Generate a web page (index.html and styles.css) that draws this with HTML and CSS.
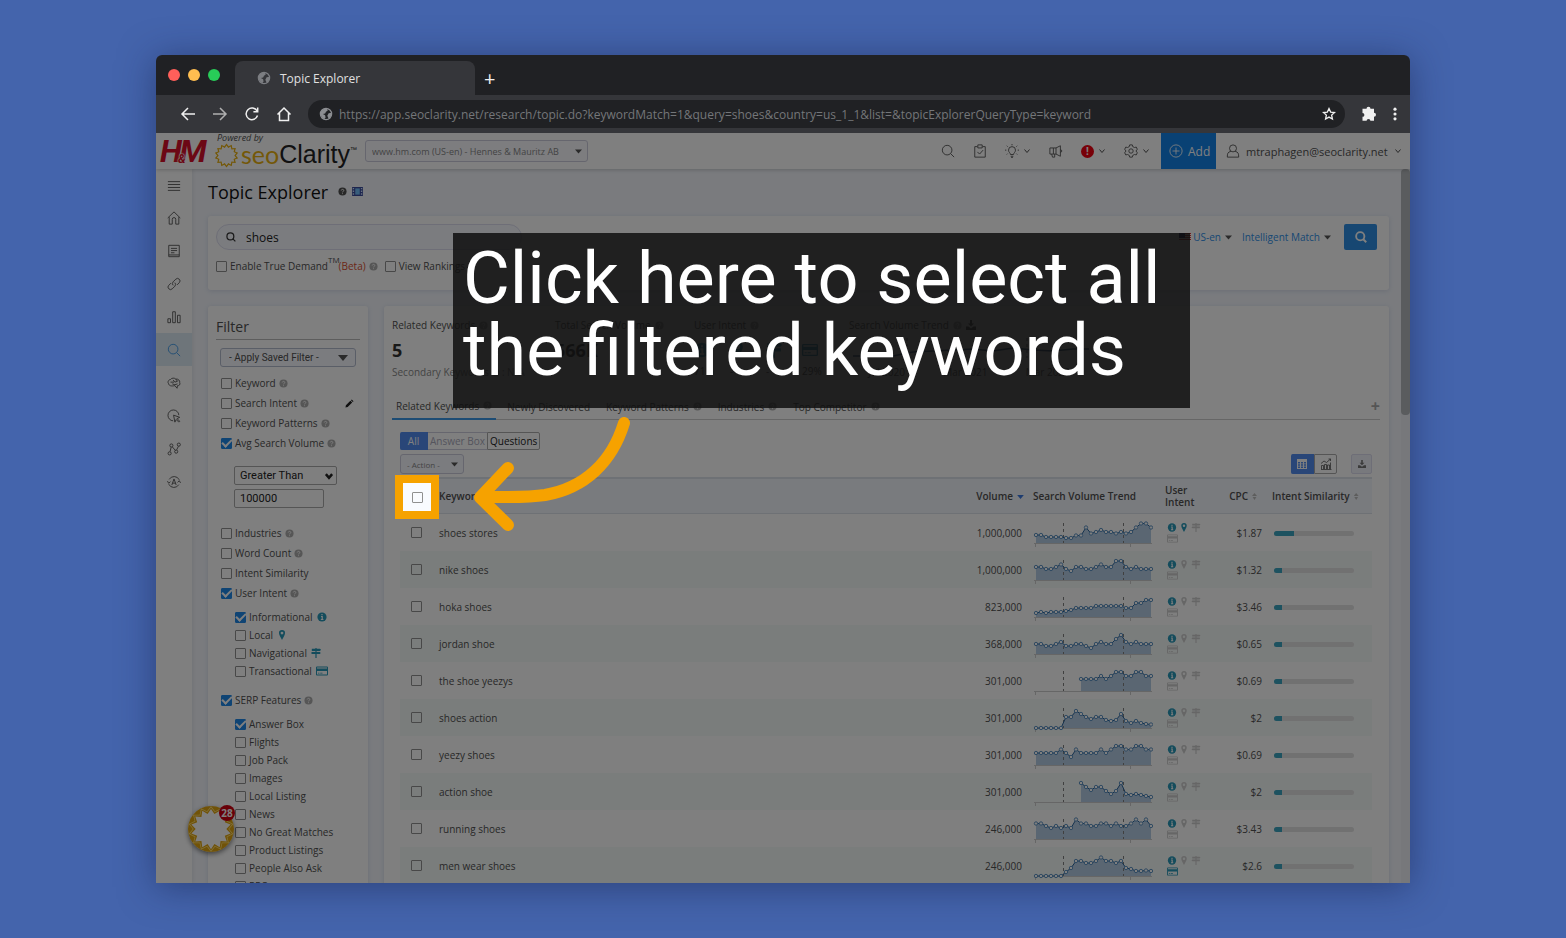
FILE: index.html
```html
<!DOCTYPE html>
<html lang="en">
<head>
<meta charset="utf-8">
<title>Topic Explorer</title>
<link rel="stylesheet" href="styles.css">
</head>
<body>
<svg class="sprite" aria-hidden="true">
  <symbol id="globe" viewBox="0 0 16 16"><circle cx="8" cy="8" r="6.500" fill="none" stroke="currentColor" stroke-width="1.300"/><path fill="currentColor" stroke="none" d="M2 6c1-3 4-4.500 7-4.200L10 4 8 5.500 7 7.500 4.500 8 7 9.500 7.500 12 6 14C3.500 13 1.500 10 2 6zM11 7l3.500-.5c.4 3-1 5.500-3.500 6.800L9.500 10z"/></symbol>
  <symbol id="back" viewBox="0 0 16 16"><path d="M15 8H2M8 2 2 8l6 6"/></symbol>
  <symbol id="fwd" viewBox="0 0 16 16"><path d="M1 8h13M8 2l6 6-6 6"/></symbol>
  <symbol id="reload" viewBox="0 0 16 16"><path d="M13.500 9.500A5.800 5.800 0 1 1 13 5M13.700 1.500v4.300H9.400"/></symbol>
  <symbol id="home" viewBox="0 0 16 16"><path d="M1.500 8.500 8 2l6.500 6.500M3.500 7v7.500h9V7"/></symbol>
  <symbol id="star" viewBox="0 0 16 16"><path d="m8 1.800 1.900 4 4.400.5-3.300 3 .9 4.400L8 11.500l-3.900 2.200.9-4.400-3.300-3 4.400-.5z"/></symbol>
  <symbol id="puzzle" viewBox="0 0 16 16"><path fill="currentColor" stroke="none" d="M5.500 2.800a2 2 0 0 1 4 0H13v4a2 2 0 1 1 0 4v4H9.400a1.900 1.900 0 0 0-3.800 0H1.500v-4a1.900 1.900 0 0 0 0-3.800V2.800z"/></symbol>
  <symbol id="dots" viewBox="0 0 16 16"><g fill="currentColor" stroke="none"><circle cx="8" cy="2.500" r="1.800"/><circle cx="8" cy="8" r="1.800"/><circle cx="8" cy="13.500" r="1.800"/></g></symbol>
  <symbol id="chev" viewBox="0 0 8 8"><path d="m1.500 2.500 2.500 3 2.500-3"/></symbol>
  <symbol id="caret" viewBox="0 0 10 6"><path fill="currentColor" stroke="none" d="M0 0h10L5 6z"/></symbol>
  <symbol id="search" viewBox="0 0 16 16"><circle cx="7" cy="7" r="5.500"/><path d="m11 11 4 4"/></symbol>
  <symbol id="clip" viewBox="0 0 16 16"><path d="M5 3H2v12h12V3h-3M5.500 1h5v3.500h-5zM5 9l2.500 2.500L11.500 7"/></symbol>
  <symbol id="bulb" viewBox="0 0 16 16"><path d="M6.200 12c0-2-2.200-2.500-2.200-5a4 4 0 0 1 8 0c0 2.500-2.200 3-2.200 5zM6.500 14h3M7 15.500h2M8 0v1.500M2 2l1 1M14 2l-1 1M0 7h1.500M14.500 7H16M2 12l1-1M14 12l-1-1"/></symbol>
  <symbol id="horn" viewBox="0 0 16 16"><path d="M1 4.500h4v7H1zM5 4.500h3l5-2.500v12l-5-2.500H5M8 4.500v7M3 11.500l1 3.500h2.500v-3.500M13 6.500c2.200 0 2.200 3 0 3"/></symbol>
  <symbol id="gear" viewBox="0 0 16 16"><circle cx="8" cy="8" r="2.500"/><path d="m6.500 1-.5 2-2 1-2-.5L.8 6l1.500 2L.8 10l1.200 2.500L4 12l2 1 .5 2h3l.5-2 2-1 2 .5 1.200-2.500-1.500-2 1.500-2L14 3.500l-2 .5-2-1-.5-2z"/></symbol>
  <symbol id="plusc" viewBox="0 0 16 16"><circle cx="8" cy="8" r="7"/><path d="M8 4v8M4 8h8"/></symbol>
  <symbol id="user" viewBox="0 0 16 16"><circle cx="8" cy="5" r="4"/><path d="M5.500 8.500C2 9 1.500 11 1.500 15h13c0-4-.5-6-4-6.500"/></symbol>
  <symbol id="menu" viewBox="0 0 16 16"><path d="M1 3h14M1 6.300h14M1 9.700h14M1 13h14"/></symbol>
  <symbol id="house" viewBox="0 0 16 16"><path d="M.8 8 8 1l7.200 7M2.500 7v8h3.500v-5.500a2 2 0 0 1 4 0V15h3.500V7"/></symbol>
  <symbol id="doc" viewBox="0 0 16 16"><path d="M2 1.500h12v13H2zM4.500 5h7M4.500 7.500h7M4.500 10h4M2 12.500h12"/></symbol>
  <symbol id="link" viewBox="0 0 16 16"><path d="M7 9.500a3 3 0 0 1 0-4l3-3a2.600 2.600 0 0 1 4 4L11.500 9M9 6.500a3 3 0 0 1 0 4l-3 3a2.600 2.600 0 0 1-4-4L4.500 7"/></symbol>
  <symbol id="bars" viewBox="0 0 16 16"><path d="M1 10h3v4.500H1zM6.500 2h3v12.500h-3zM12 6h3v8.500h-3z"/></symbol>
  <symbol id="brain" viewBox="0 0 16 16"><path d="M2 9C0 7 2 4 4 4c1-2 5-2 6-.5 3-.5 5 2 4.500 4 1 2-.5 4-2.500 3.500L11.500 14 9 11C5 12 2 11 2 9zM4 7h4M7 4.500 9 7l3-1M6 9l3 1 3-1M10 3.500 12 6"/></symbol>
  <symbol id="click" viewBox="0 0 16 16"><path d="M7 13.500A6.200 6.200 0 1 1 13.500 7M7.500 7l7 2.500-3 1.500 3 3-1 1-3-3-1.500 3z"/></symbol>
  <symbol id="nodes" viewBox="0 0 16 16"><circle cx="3" cy="13" r="1.800"/><circle cx="5" cy="4" r="1.800"/><circle cx="10.500" cy="11" r="1.800"/><circle cx="13.500" cy="3" r="1.800"/><path d="M3.500 11 4.700 6M6 5.500l3.500 4M11 9l2-4"/></symbol>
  <symbol id="auto" viewBox="0 0 16 16"><path d="M2.500 5A6.500 6.500 0 0 1 14 5.500M13.500 11A6.500 6.500 0 0 1 2 10.500M.5 7l1.500 2.500L4 7.500M12 8.500l2-2 1.500 2.500M5.500 11.500 8 4.500l2.500 7M6.300 9.300h3.400"/></symbol>
  <symbol id="help" viewBox="0 0 10 10"><circle cx="5" cy="5" r="4.500" fill="currentColor" stroke="none"/><path d="M3.600 3.900c.1-1.700 2.900-1.600 2.800 0C6.400 4.800 5 4.900 5 6M5 7v.9" stroke="#fff" stroke-width="1"/></symbol>
  <symbol id="info" viewBox="0 0 10 10"><circle cx="5" cy="5" r="4.600" fill="currentColor" stroke="none"/><path d="M5 2v1.300M4 4.500h1.200v3M3.800 7.500h2.600" stroke="#fff" stroke-width="1.200"/></symbol>
  <symbol id="pin" viewBox="0 0 10 10"><path fill="currentColor" stroke="none" fill-rule="evenodd" d="M5 0a3 3 0 0 1 3 3.200C8 5 6 7.500 5 10 4 7.500 2 5 2 3.200A3 3 0 0 1 5 0zm0 1.700a1.400 1.400 0 1 0 0 2.800 1.400 1.400 0 0 0 0-2.800z"/></symbol>
  <symbol id="sign" viewBox="0 0 10 10"><path fill="currentColor" stroke="none" d="M4.400 0h1.200v.8H9l1 1-1 1.100H5.600v1H9.300v2H5.600V10H4.400V5.900H1L0 4.900l1-1h3.400v-1H.8V.8h3.600z"/></symbol>
  <symbol id="card" viewBox="0 0 12 10"><path fill="currentColor" stroke="none" fill-rule="evenodd" d="M1 .5h10q1 0 1 1v7q0 1-1 1H1q-1 0-1-1v-7q0-1 1-1zM1 1.500v1h10v-1zM1 5v3.500h10V5zM2 6.700h1.500v.8H2zM4.200 6.700h2.300v.8H4.200z"/></symbol>
  <symbol id="pencil" viewBox="0 0 10 10"><path fill="currentColor" stroke="none" d="m1 7 5-5 2 2-5 5-2.500.5zM6.600 1.400 7.500.5l2 2-.9.9z"/></symbol>
  <symbol id="film" viewBox="0 0 12 10"><path fill="#3a4a9c" stroke="none" d="M0 0h12v10H0z"/><path fill="#70bcf8" stroke="none" d="M3.500 1.500h5v7h-5z"/><path stroke="#cfe4ff" stroke-width="1.500" stroke-dasharray="1.500 1.500" d="M1.500 1v8M10.500 1v8"/></symbol>
  <symbol id="dl" viewBox="0 0 10 10"><path fill="currentColor" stroke="none" d="M4 0h2v3.500h2L5 6.500 2 3.500h2zM0 6.500h2.500L5 8.500l2.500-2H10V10H0z"/></symbol>
  <symbol id="grid" viewBox="0 0 12 12"><path fill="currentColor" stroke="none" fill-rule="evenodd" d="M1 1h10v10H1zM2 4v1.500h2V4zM5 4v1.500h2V4zM8 4v1.500h2V4zM2 6.300v1.500h2V6.300zM5 6.300v1.500h2V6.300zM8 6.300v1.500h2V6.300zM2 8.600V10h2V8.600zM5 8.600V10h2V8.600zM8 8.600V10h2V8.600z"/></symbol>
  <symbol id="chart" viewBox="0 0 12 12"><path d="M1 11.500h10.500M1.500 11V7.500h2V11M4.500 11V6.500h2V11M7.500 11V7h2V11M10.500 11V4.500M1 5.500l3-2.500 2.500 1.500L10.500 1M8.500 1h2v2" stroke-width=".8"/></symbol>
  <symbol id="sun" viewBox="0 0 48 48"><path class="rays" data-outer="23 18" data-inner="19 15" fill="currentColor" stroke="none" fill-rule="evenodd"/></symbol>
  <symbol id="badge" viewBox="0 0 48 48"><path class="rays" data-outer="24 24" data-inner="21 16" fill="currentColor" stroke="none" fill-rule="evenodd"/><path class="rays" data-outer="24 19" data-inner="22.500 18" fill="#ffe070" stroke="none" fill-rule="evenodd"/></symbol>
</svg>

<div class="browser">
  <div class="tabbar">
    <div class="lights"><i class="red"></i><i class="amber"></i><i class="green"></i></div>
    <div class="tab"><svg class="i14"><use href="#globe"/></svg><span>Topic Explorer</span></div>
    <button class="newtab" aria-label="New tab">+</button>
  </div>
  <div class="toolbar">
    <button aria-label="Back"><svg class="i16"><use href="#back"/></svg></button>
    <button class="faded" aria-label="Forward"><svg class="i16"><use href="#fwd"/></svg></button>
    <button aria-label="Reload"><svg class="i16"><use href="#reload"/></svg></button>
    <button aria-label="Home"><svg class="i16"><use href="#home"/></svg></button>
    <div class="address">
      <svg class="i14"><use href="#globe"/></svg>
      <input type="text" aria-label="Address" value="https://app.seoclarity.net/research/topic.do?keywordMatch=1&amp;query=shoes&amp;country=us_1_1&amp;list=&amp;topicExplorerQueryType=keyword">
      <svg class="i14 bright"><use href="#star"/></svg>
    </div>
    <div class="ext">
      <button aria-label="Extensions"><svg class="i16"><use href="#puzzle"/></svg></button>
      <button aria-label="Menu"><svg class="i14"><use href="#dots"/></svg></button>
    </div>
  </div>

  <div class="app">
    <header class="top">
      <span class="hm">H<small>&amp;</small>M</span>
      <div class="brand">
        <span class="powered">Powered by</span>
        <span class="logo"><svg class="sun"><use href="#sun"/></svg><b>seo</b><span>Clarity</span><sup>™</sup></span>
      </div>
      <span class="pick domain"><select aria-label="Domain"><option>www.hm.com (US-en) - Hennes &amp; Mauritz AB</option></select><svg class="caret"><use href="#caret"/></svg></span>
      <nav class="tools">
        <button aria-label="Search"><svg class="i14"><use href="#search"/></svg></button>
        <button aria-label="Tasks"><svg class="i14"><use href="#clip"/></svg></button>
        <button aria-label="Ideas"><svg class="i14"><use href="#bulb"/></svg><svg class="i8"><use href="#chev"/></svg></button>
        <button aria-label="News"><svg class="i14"><use href="#horn"/></svg></button>
        <button aria-label="Alerts"><span class="alert">!</span><svg class="i8"><use href="#chev"/></svg></button>
        <button aria-label="Settings"><svg class="i14"><use href="#gear"/></svg><svg class="i8"><use href="#chev"/></svg></button>
      </nav>
      <button class="add"><svg class="i14"><use href="#plusc"/></svg>Add</button>
      <button class="account"><svg class="i14"><use href="#user"/></svg>mtraphagen@seoclarity.net<svg class="i8"><use href="#chev"/></svg></button>
    </header>
    <div class="body">
      <nav class="side">
        <a href="#" aria-label="Menu"><svg class="i14"><use href="#menu"/></svg></a>
        <a href="#" aria-label="Home"><svg class="i14"><use href="#house"/></svg></a>
        <a href="#" aria-label="Content"><svg class="i14"><use href="#doc"/></svg></a>
        <a href="#" aria-label="Links"><svg class="i14"><use href="#link"/></svg></a>
        <a href="#" aria-label="Analytics"><svg class="i14"><use href="#bars"/></svg></a>
        <a href="#" class="on" aria-label="Research"><svg class="i14"><use href="#search"/></svg></a>
        <a href="#" aria-label="Insights"><svg class="i14"><use href="#brain"/></svg></a>
        <a href="#" aria-label="Clicks"><svg class="i14"><use href="#click"/></svg></a>
        <a href="#" aria-label="Site"><svg class="i14"><use href="#nodes"/></svg></a>
        <a href="#" aria-label="Automation"><svg class="i14"><use href="#auto"/></svg></a>
      </nav>
      <main class="content">
        <h1>Topic Explorer <svg class="q dark"><use href="#help"/></svg><svg class="film"><use href="#film"/></svg></h1>
        <section class="panel query">
          <div class="line">
            <label class="searchbox"><svg class="i10"><use href="#search"/></svg><input type="text" aria-label="Topic" value="shoes"></label>
            <div class="opts">
              <button class="lnk"><svg class="flag" viewBox="0 0 12 8"><path fill="#fff" stroke="none" d="M0 0h12v8H0z"/><path stroke="#d33" d="M0 .5h12M0 2.500h12M0 4.500h12M0 6.500h12"/><path fill="#226" stroke="none" d="M0 0h6v5H0z"/></svg>US-en<svg class="caret"><use href="#caret"/></svg></button>
              <button class="lnk">Intelligent Match<svg class="caret"><use href="#caret"/></svg></button>
              <button class="go" aria-label="Search topic"><svg class="i14"><use href="#search"/></svg></button>
            </div>
          </div>
          <div class="checks">
            <label><input type="checkbox">Enable True Demand<sup>TM</sup><em>(Beta)</em><svg class="q"><use href="#help"/></svg></label>
            <label><input type="checkbox">View Rankings</label>
          </div>
        </section>
        <div class="cols">
          <aside class="panel filter">
            <h2>Filter</h2>
            <span class="pick saved"><select aria-label="Saved filter"><option>- Apply Saved Filter -</option></select><svg class="caret"><use href="#caret"/></svg></span>
            <label><input type="checkbox">Keyword<svg class="q"><use href="#help"/></svg></label>
            <label><input type="checkbox">Search Intent<svg class="q"><use href="#help"/></svg><svg class="pencil"><use href="#pencil"/></svg></label>
            <label><input type="checkbox">Keyword Patterns<svg class="q"><use href="#help"/></svg></label>
            <label><input type="checkbox" checked>Avg Search Volume<svg class="q"><use href="#help"/></svg></label>
            <div class="range">
              <span class="pick"><select aria-label="Comparison"><option>Greater Than</option></select><svg class="i10 bold"><use href="#chev"/></svg></span>
              <input type="text" aria-label="Volume" value="100000">
            </div>
            <label><input type="checkbox">Industries<svg class="q"><use href="#help"/></svg></label>
            <label><input type="checkbox">Word Count<svg class="q"><use href="#help"/></svg></label>
            <label><input type="checkbox">Intent Similarity</label>
            <label><input type="checkbox" checked>User Intent<svg class="q"><use href="#help"/></svg></label>
            <div class="sub">
              <label><input type="checkbox" checked>Informational<svg class="i10 teal"><use href="#info"/></svg></label>
              <label><input type="checkbox">Local<svg class="i10 teal"><use href="#pin"/></svg></label>
              <label><input type="checkbox">Navigational<svg class="i10 teal"><use href="#sign"/></svg></label>
              <label><input type="checkbox">Transactional<svg class="i12 teal"><use href="#card"/></svg></label>
            </div>
            <label><input type="checkbox" checked>SERP Features<svg class="q"><use href="#help"/></svg></label>
            <div class="sub">
              <label><input type="checkbox" checked>Answer Box</label>
              <label><input type="checkbox">Flights</label>
              <label><input type="checkbox">Job Pack</label>
              <label><input type="checkbox">Images</label>
              <label><input type="checkbox">Local Listing</label>
              <label><input type="checkbox">News</label>
              <label><input type="checkbox">No Great Matches</label>
              <label><input type="checkbox">Product Listings</label>
              <label><input type="checkbox">People Also Ask</label>
              <label><input type="checkbox">PPC</label>
            </div>
          </aside>
          <section class="panel results">
            <div class="stats">
              <div><p>Related Keywords<svg class="q"><use href="#help"/></svg></p><strong>5</strong><small>Secondary Keywords<svg class="q"><use href="#help"/></svg> : N/A</small></div>
              <div><p>Total Search Volume<svg class="q"><use href="#help"/></svg></p><strong>566K</strong></div>
              <div><p>User Intent<svg class="q"><use href="#help"/></svg></p>
                <div class="mix"><span><svg class="i16 teal"><use href="#info"/></svg>71%</span><span><svg class="i16 teal"><use href="#pin"/></svg>-</span><span><svg class="i16 teal"><use href="#sign"/></svg>-</span><span><svg class="i16 teal"><use href="#card"/></svg>29%</span></div></div>
              <div><p>Search Volume Trend<svg class="q"><use href="#help"/></svg><svg class="i10"><use href="#dl"/></svg></p>
                <svg class="wide" viewBox="0 0 240 24"><path d="M4 18h40l20-4 20-1 40-2 20 2 20-3 20 2 20 1 20-2h16" stroke="#1c4f80" stroke-width="1.500"/><path d="M58 0v20M178 0v20" stroke="#667" stroke-dasharray="3 3"/></svg>
                <div class="months"><span>Jul 2020</span><span>Mar 2021</span><span>Mar 2022</span></div></div>
            </div>
            <nav class="tabs">
              <a href="#" class="on">Related Keywords<svg class="q"><use href="#help"/></svg></a>
              <a href="#">Newly Discovered</a>
              <a href="#">Keyword Patterns<svg class="q"><use href="#help"/></svg></a>
              <a href="#">Industries<svg class="q"><use href="#help"/></svg></a>
              <a href="#">Top Competitor<svg class="q"><use href="#help"/></svg></a>
              <button aria-label="Add tab">+</button>
            </nav>
            <div class="inner">
              <div class="seg"><button class="on">All</button><button class="off">Answer Box</button><button class="alt">Questions</button></div>
              <div class="actions">
                <span class="pick action"><select aria-label="Action"><option>- Action -</option></select><svg class="caret"><use href="#caret"/></svg></span>
                <div class="views">
                  <div class="seg tall"><button class="on" aria-label="Table view"><svg class="i12"><use href="#grid"/></svg></button><button class="alt" aria-label="Chart view"><svg class="i12"><use href="#chart"/></svg></button></div>
                  <button class="export" aria-label="Download"><svg class="i8"><use href="#dl"/></svg></button>
                </div>
              </div>
              <table class="grid">
                <colgroup><col class="c-check"><col><col class="c-vol"><col class="c-trend"><col class="c-intent"><col class="c-cpc"><col class="c-sim"></colgroup>
                <thead><tr>
                  <th class="mark"><label class="spot"><input type="checkbox" aria-label="Select all"></label></th>
                  <th>Keywords</th>
                  <th class="num vol">Volume<svg class="down"><use href="#caret"/></svg></th>
                  <th class="trend">Search Volume Trend</th>
                  <th>User<br>Intent</th>
                  <th class="num cpc">CPC<span class="sort"></span></th>
                  <th class="sim">Intent Similarity<span class="sort"></span></th>
                </tr></thead>
                <tbody id="rows"></tbody>
              </table>
            </div>
          </section>
        </div>
      </main>
      <div class="scroll"><i></i></div>
    </div>
    <button class="chat" aria-label="Help center"><svg class="sun"><use href="#badge"/></svg><span>28</span></button>
    <div class="dim"></div>
  </div>

  <div class="note">Click here to select all<br>the filtered keywords</div>
  <svg class="arrow" viewBox="0 0 160 116"><path d="M152 6C140 45 113 71 73 78 53 81 30 80 10 80M36 51 8 80.500 36 108"/></svg>
</div>
<script src="app.js"></script>
</body>
</html>
```
FILE: styles.css
```css
* { box-sizing: border-box; }
body { margin: 0; height: 100vh; padding: 55px 156px; background: #4464ac; font-family: "Open Sans", "Noto Sans", sans-serif; font-size: 10px; color: #505050; overflow: hidden; }
button, input, select { font: inherit; color: inherit; margin: 0; }
button { background: none; border: 0; padding: 0; display: flex; align-items: center; }
a { color: inherit; text-decoration: none; }
svg { fill: none; stroke: currentColor; stroke-width: 1; flex: none; }
.sprite { position: absolute; width: 0; height: 0; }
.i8 { width: 8px; height: 8px; }
.i10 { width: 10px; height: 10px; }
.i12 { width: 12px; height: 10px; }
.i14 { width: 14px; height: 14px; }
.i16 { width: 16px; height: 16px; }
.q { width: 9px; height: 9px; color: #acacac; }
.q.dark { color: #505050; }
.caret { width: 7px; height: 5px; color: #555; }
.teal { color: #2898b8; }

.browser { position: relative; height: 100%; display: flex; flex-direction: column; border-radius: 6px 6px 0 0; box-shadow: 0 4px 36px rgba(20, 30, 70, .5); }
.tabbar { height: 40px; flex: none; display: flex; align-items: flex-end; background: #202124; border-radius: 6px 6px 0 0; }
.lights { width: 79px; height: 40px; display: flex; align-items: center; gap: 8px; padding-left: 12px; }
.lights i { width: 12px; height: 12px; border-radius: 50%; }
.red { background: #ff5f5a; }
.amber { background: #ffbe50; }
.green { background: #28cc58; }
.tab { width: 240px; height: 34px; display: flex; align-items: center; gap: 9px; padding-left: 22px; background: #35363a; border-radius: 8px 8px 0 0; color: #e0e0e0; font-size: 12px; }
.tab svg { color: #7c7e82; }
.newtab { height: 34px; padding-left: 9px; color: #f0f0f0; font-size: 20px; }
.toolbar { height: 38px; flex: none; display: flex; align-items: center; gap: 16px; padding: 0 8px 0 24px; background: #35363a; color: #f0f0f0; }
.toolbar svg { stroke-width: 1.500; }
.toolbar .faded { color: #b0b0b0; }
.ext { display: flex; align-items: center; gap: 11px; }
.address { flex: 1; height: 28px; display: flex; align-items: center; gap: 6px; padding: 0 9px 0 11px; border-radius: 14px; background: #202124; color: #8b8d91; }
.address input { flex: 1; border: 0; padding: 0; background: none; font-size: 12px; color: #747679; outline: 0; }
.address .bright { color: #f0f0f0; }

.app { position: relative; flex: 1; min-height: 0; display: flex; flex-direction: column; background: #f4f7fd; overflow: hidden; }
.dim { position: absolute; inset: 0; background: rgba(0, 0, 0, .5); z-index: 2; }
.top { height: 36px; flex: none; display: flex; align-items: center; background: #fff; box-shadow: 0 1px 4px rgba(0, 0, 0, .2); z-index: 1; }
.hm { width: 58px; padding-left: 4px; color: #d8102a; font: italic bold 32px/36px Roboto, sans-serif; white-space: nowrap; display: flex; align-items: center; }
.hm small { font-size: 12px; line-height: 14px; align-self: flex-end; margin: 0 -6px 3px -4px; z-index: 1; text-shadow: 0 0 1px #fff, 0 0 1px #fff, 0 0 2px #fff, 0 0 2px #fff; }
.brand { width: 151px; display: flex; flex-direction: column; padding-bottom: 3px; }
.powered { font-size: 9px; line-height: 9px; font-style: italic; padding-left: 3px; }
.logo { display: flex; align-items: center; height: 24px; font: 25px/24px "Liberation Sans", sans-serif; color: #222; white-space: nowrap; }
.logo .sun { width: 25px; height: 25px; margin: 2px 2px 0 0; color: #e8b010; }
.logo b { font: 25px/24px Lato, sans-serif; color: #e8b010; }
.logo sup { font-size: 7px; line-height: 8px; align-self: flex-start; padding-top: 4px; }
.pick { display: grid; align-items: center; }
.pick > * { grid-area: 1 / 1; }
.pick select { appearance: none; width: 100%; background: #fff; border: 1px solid #bbb; border-radius: 3px; padding: 0 6px; outline: 0; }
.pick svg { justify-self: end; margin-right: 6px; pointer-events: none; }
.domain { width: 223px; color: #888; font-size: 9px; }
.domain select { height: 22px; background: #fafbff; border-color: #ccd; }
.tools { flex: 1; display: flex; justify-content: flex-end; gap: 18px; padding-right: 11px; }
.tools button { gap: 4px; }
.alert { width: 13px; height: 13px; border-radius: 50%; background: #f00010; color: #fff; font-weight: bold; line-height: 13px; text-align: center; }
.add { align-self: stretch; width: 55px; gap: 5px; padding-left: 8px; background: #1282e8; color: #fff; font-size: 12px; }
.account { width: 194px; padding-left: 10px; gap: 6px; font-size: 11px; }

.body { flex: 1; min-height: 0; display: flex; }
.side { width: 36px; flex: none; display: flex; flex-direction: column; background: #fff; padding-top: 2px; box-shadow: 1px 0 4px rgba(0, 0, 0, .08); }
.side a { height: 33px; display: grid; place-items: center; }
.side a:first-child { height: 30px; }
.side .on { background: #dceaf4; color: #3a98e8; }
.content { flex: 1; min-width: 0; padding: 0 12px 0 16px; }
h1 { margin: 0; height: 47px; padding-bottom: 2px; display: flex; align-items: center; color: #111; font-size: 18px; font-weight: 500; white-space: nowrap; }
h1 .q { margin: 0 5px 0 10px; }
.film { width: 11px; height: 9px; }
.panel { background: #fff; box-shadow: 0 1px 5px rgba(80, 100, 150, .18); border-radius: 3px; }
.query { height: 74px; padding: 8px 12px 0 8px; }
.line { display: flex; justify-content: space-between; }
.searchbox { width: 306px; height: 26px; display: flex; align-items: center; gap: 10px; padding-left: 9px; border: 1px solid #dde; border-radius: 13px; background: #f7f9ff; color: #333; }
.searchbox svg { stroke-width: 2; }
.searchbox input { border: 0; padding: 0; background: none; outline: 0; color: #222; font-size: 12px; }
.opts { display: flex; align-items: center; gap: 10px; }
.lnk { color: #3090e8; gap: 4px; }
.flag { width: 12px; height: 8px; margin-right: -2px; }
.go { width: 33px; height: 26px; margin-left: 3px; justify-content: center; background: #2f8fe4; color: #fff; border-radius: 2px; }
.go svg { width: 12px; height: 12px; stroke-width: 2.500; }
.checks { display: flex; gap: 7px; padding-top: 9px; }
label { display: flex; align-items: center; white-space: nowrap; }
.checks sup { font-size: 8px; line-height: 8px; align-self: flex-start; margin: -3px -1px 0 0; }
.checks em { font-style: normal; color: #d85030; margin-right: 3px; }
input[type="checkbox"] { appearance: none; flex: none; width: 11px; height: 11px; margin: 0 3px 0 0; border: 1px solid #909090; border-radius: 1px; display: grid; place-items: center; }
input[type="checkbox"]:checked { background: #1f88e8; border-color: #1f88e8; }
input[type="checkbox"]:checked::before { content: ""; width: 8px; height: 4px; margin-top: -2px; border: solid #fff; border-width: 0 0 2px 2px; transform: rotate(-45deg); }

.cols { display: flex; gap: 16px; margin-top: 16px; align-items: flex-start; }
.filter { width: 160px; flex: none; padding: 8px 8px 20px; }
h2 { margin: 0 0 8px; height: 26px; line-height: 26px; border-bottom: 1px solid #bbb; font-size: 14px; font-weight: 400; }
.saved { margin: 0 4px 6px; font-family: Roboto, sans-serif; font-size: 10px; }
.saved select { height: 19px; background: #f7f9ff; border-color: #b4bccf; padding: 0 8px; }
.saved .caret { width: 10px; height: 6px; margin-right: 8px; }
.filter label { height: 20px; padding-left: 5px; }
.filter label .q { margin-left: 3px; }
.filter .pencil { width: 9px; height: 9px; margin: 0 6px 0 auto; color: #222; }
.range { padding: 13px 0 15px 18px; display: flex; flex-direction: column; align-items: flex-start; gap: 4px; font-family: Roboto, sans-serif; font-size: 11px; color: #222; }
.range .pick { width: 103px; }
.range select, .range > input { height: 19px; border: 1px solid #aaa; border-radius: 2px; background: #fff; padding: 0 5px; }
.range > input { width: 90px; }
.range .pick svg { margin-right: 3px; }
.bold { stroke-width: 2; }
.sub { padding: 5px 0 10px 14px; }
.sub label { height: 18px; }
.sub svg { margin-left: 4px; }

.results { flex: 1; min-width: 0; padding: 12px 9px 20px 8px; }
.stats { display: grid; grid-template-columns: 163px 139px 155px 240px; height: 75px; line-height: 14px; }
.stats p { margin: 0; display: flex; align-items: center; gap: 4px; }
.stats strong { display: block; font-size: 18px; line-height: 37px; color: #333; }
.stats small { font-size: 10px; line-height: 6px; height: 6px; color: #888; white-space: nowrap; display: flex; align-items: center; gap: 2px; }
.mix { display: flex; gap: 18px; padding-top: 10px; }
.mix span { display: grid; gap: 6px; width: 18px; }
.wide { width: 100%; height: 24px; margin-top: 6px; }
.months { display: flex; justify-content: space-around; }
.tabs { display: flex; gap: 16px; height: 27px; border-bottom: 1px solid #ccc; align-items: stretch; }
.tabs a { display: flex; gap: 4px; align-items: center; height: 27px; }
.tabs .on { padding: 0 4px; border-bottom: 2px solid #3a98e8; margin-right: -5px; }
.tabs button { margin-left: auto; font-size: 16px; font-weight: bold; color: #aaa; }
.inner { padding: 12px 8px 0; }
.seg { display: flex; height: 18px; color: #aab; font-size: 10px; }
.seg button { height: 18px; padding: 0 2px; justify-content: center; border: 1px solid #ccd; border-left: 0; }
.seg .on { width: 28px; background: #528cf0; border-color: #528cf0; color: #fff; border-radius: 2px 0 0 2px; }
.seg .off { border-right: 0; }
.seg .alt { border: 1px solid #aaa; border-radius: 0 2px 2px 0; color: #222; }
.actions { display: flex; justify-content: space-between; padding: 4px 0 3px; }
.action { width: 64px; font-size: 8px; color: #888; }
.action select { height: 20px; background: #f7f9ff; border-color: #ccd; }
.views { display: flex; gap: 14px; }
.tall, .seg.tall button { height: 20px; }
.seg.tall button { width: 23px; }
.seg.tall .alt { color: #555; }
.seg.tall svg { height: 12px; }
.export { width: 21px; height: 20px; justify-content: center; background: #f0f2fa; border: 1px solid #dde; border-radius: 2px; color: #777; }

.grid { width: 100%; table-layout: fixed; border-collapse: separate; border-spacing: 0; }
.c-check { width: 35px; }
.c-vol { width: 91px; }
.c-trend { width: 132px; }
.c-intent { width: 60px; }
.c-cpc { width: 50px; }
.c-sim { width: 104px; }
th { height: 37px; padding: 0 4px; background: #f3f6fc; border: solid #dde2ea; border-width: 2px 0 1px; text-align: left; font-weight: 600; line-height: 12px; white-space: nowrap; }
td { height: 37px; padding: 0 4px; }
tbody tr:nth-child(even) td { background: #f5faf9; }
.num { text-align: right; }
td.num { padding-right: 6px; }
td.vol { padding-right: 4px; }
th.vol { padding-right: 2px; }
th.cpc { padding-right: 11px; }
.trend { padding-left: 7px; }
td.intent { padding-left: 9px; }
th.sim { padding-left: 4px; }
th:nth-child(5) { padding-left: 7px; }
td:first-child { padding-left: 11px; }
.down { width: 7px; height: 4px; margin: 0 0 1px 4px; color: #3a78e0; }
.sort { display: inline-block; margin-left: 4px; width: 5px; height: 7px; background: linear-gradient(#bbb 0 3px, transparent 3px 4px, #bbb 4px); clip-path: polygon(50% 0, 100% 43%, 50% 100%, 0 43%); }
.spark { display: block; width: 120px; height: 30px; }
.spark .area { fill: #b4cce4; stroke: none; }
.spark .curve { stroke: #2a649c; stroke-width: 1; }
.spark .dot { fill: #fff; stroke: #5f94c4; stroke-width: 1; }
.spark .axis { stroke: #ccc; }
.spark .cut { stroke: #808080; stroke-dasharray: 3 3; }
.icons { display: flex; flex-wrap: wrap; gap: 2px; width: 36px; color: #ccc; }
.icons svg { width: 10px; height: 9px; }
.icons svg:last-child { width: 11px; }
.icons .has { color: #2898b8; }
td progress { display: block; appearance: none; width: 80px; height: 5px; border: 0; margin: 2px 0 0 2px; }
progress::-webkit-progress-bar { background: #e2e2e2; border-radius: 3px; }
progress::-webkit-progress-value { background: #3aa4c0; border-radius: 3px 0 0 3px; }
.mark { position: relative; }
.spot { position: absolute; left: -5px; top: -4px; z-index: 3; width: 44px; height: 44px; border: 8px solid #f6a200; background: #f9fbff; justify-content: center; }
.spot input[type="checkbox"] { margin: 0; }

.scroll { width: 9px; flex: none; background: #eef0f6; }
.scroll i { display: block; height: 246px; border-radius: 4px; background: #b4b8bc; }
.chat { position: absolute; left: 32px; bottom: 31px; width: 46px; height: 46px; border-radius: 50%; background: #fff; box-shadow: 0 2px 5px rgba(0, 0, 0, .5); color: #e0a410; }
.chat .sun { width: 46px; height: 46px; }
.chat span { position: absolute; right: -1px; top: -1px; width: 16px; height: 16px; border-radius: 50%; background: #d00010; color: #fff; font-weight: bold; line-height: 16px; text-align: center; }

.note { position: absolute; left: 297px; top: 178px; z-index: 4; padding: 10px 29px 21px 10px; background: rgba(16, 16, 16, .86); color: #fff; font: 72px/72px Roboto, sans-serif; white-space: nowrap; }
.arrow { position: absolute; left: 316px; top: 362px; z-index: 4; width: 160px; height: 116px; stroke: #f6a200; stroke-width: 12; stroke-linecap: round; stroke-linejoin: round; }
```
FILE: app.js
```js
const rows = [
  ["shoes stores", "1,000,000", "$1.87", 25, [8,8,6,6,6,6,5,5,7.5,7.5,15.5,9.5,11,13,11,11,9.5,11,9.5,11,15.5,19.5,19.5,15.5], "info pin"],
  ["nike shoes", "1,000,000", "$1.32", 10, [13,13,11,11,13,15.5,11,9,13,13,11,11,13,15.5,13,13,19,19,13,11,13,11,11,11], "info"],
  ["hoka shoes", "823,000", "$3.46", 10, [4,5,4,5,5,5,6,7,9,9,9,9,11,11,11,11,11,11,9,9,14,14,17,17], "info"],
  ["jordan shoe", "368,000", "$0.65", 10, [10,10,8,8,10,12,8,8,10,10,8,6,10,12,10,10,15,19,12,10,12,10,10,10], "info"],
  ["the shoe yeezys", "301,000", "$0.69", 10, [12,12,12,12,15,12,15,19,19,15,15,19,19,15,15], "info"],
  ["shoes action", "301,000", "$2", 10, [0,0,0,0,0,0,11,11,17,14,11,9,11,11,8,7,8,14,7,5,7,5,4,3.5], "info"],
  ["yeezy shoes", "301,000", "$0.69", 10, [12,12,12,12,12,15.5,12,8,15.5,12,12,12,12,15.5,12,15.5,19,19,15.5,15.5,19,19,15.5,15.5], "info"],
  ["action shoe", "301,000", "$2", 10, [19,15,12,15,15,11,8,11,19,8,7,8,7,6,5], "info"],
  ["running shoes", "246,000", "$3.43", 10, [15.5,15.5,13,11,13,11,13,11,19.5,15.5,15.5,13,13,15.5,15.5,13,15.5,13,13,15.5,19.5,15.5,19.5,13], "info"],
  ["men wear shoes", "246,000", "$2.6", 10, [0,0,0,0,0,0,4,8,15,15,13,13,15,18.5,15,15,13,15,8,7,5,5,5.5,5], "info card"]
];

function spark(values) {
  const base = 25;
  const first = 24 - values.length;
  const pts = values.map((v, i) => [3 + 5 * (first + i), base - v]);
  const line = pts.map(p => p.join(" ")).join("L");
  const dots = pts.map(p => `<circle class="dot" cx="${p[0]}" cy="${p[1]}" r="1.7"/>`).join("");
  return `<svg class="spark" viewBox="0 0 120 30"><path class="area" d="M${pts[0][0]} ${base}L${line}L118 ${base}z"/>
    <path class="axis" d="M1 25.5h118M2.5 25v4M97.500 25v4"/><path class="cut" d="M30.500 5v20M90.500 5v20"/>
    <path class="curve" d="M${line}"/>${dots}</svg>`;
}

// Closed zigzag outline that alternates between two radii.
function zigzag([tip, dip], count) {
  const pts = [];
  for (let i = 0; i < count * 2; i++) {
    const r = i % 2 ? dip : tip;
    const a = Math.PI * i / count;
    pts.push(`${24 + r * Math.sin(a)} ${24 - r * Math.cos(a)}`);
  }
  return `M${pts.join("L")}z`;
}

document.querySelectorAll(".rays").forEach(path => {
  const { outer, inner } = path.dataset;
  path.setAttribute("d", zigzag(outer.split(" "), 14) + zigzag(inner.split(" "), 14));
});

document.getElementById("rows").innerHTML = rows.map(([name, vol, cpc, sim, trend, has]) => `<tr>
  <td><input type="checkbox" aria-label="Select ${name}"></td>
  <td>${name}</td>
  <td class="num vol">${vol}</td>
  <td class="trend">${spark(trend)}</td>
  <td class="intent"><div class="icons">${["info", "pin", "sign", "card"].map(k =>
    `<svg class="${has.includes(k) ? "has" : ""}"><use href="#${k}"/></svg>`).join("")}</div></td>
  <td class="num">${cpc}</td>
  <td><progress max="100" value="${sim}" aria-label="Intent similarity of ${name}"></progress></td>
</tr>`).join("");
```
